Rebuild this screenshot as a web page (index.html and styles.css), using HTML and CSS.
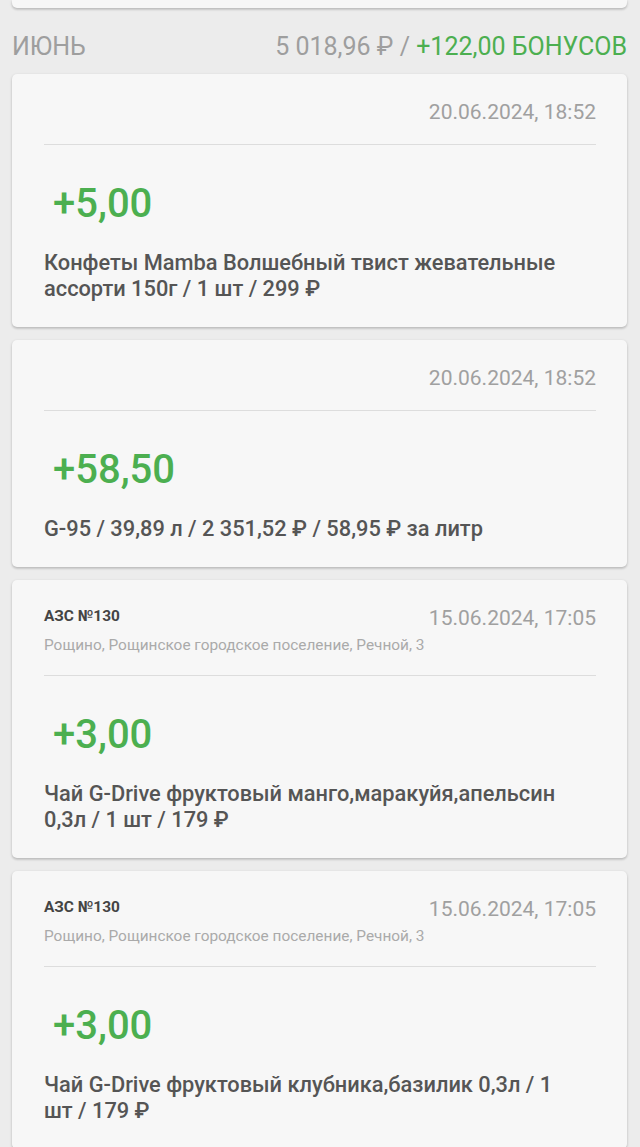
FILE: index.html
```html
<!DOCTYPE html>
<html lang="ru">
<head>
<meta charset="utf-8">
<link rel="stylesheet" href="styles.css">
</head>
<body>
<div class="page">
  <div class="card card-top"></div>
  <div class="month">
    <span class="month-name">ИЮНЬ</span>
    <span class="month-total">5 018,96 ₽ / <span class="green">+122,00 БОНУСОВ</span></span>
  </div>

  <div class="card">
    <div class="head">
      <div class="place"></div>
      <div class="date">20.06.2024, 18:52</div>
    </div>
    <div class="divider"></div>
    <div class="amount">+5,00</div>
    <div class="desc">Конфеты Mamba Волшебный твист жевательные ассорти 150г / 1 шт / 299 ₽</div>
  </div>

  <div class="card">
    <div class="head">
      <div class="place"></div>
      <div class="date">20.06.2024, 18:52</div>
    </div>
    <div class="divider"></div>
    <div class="amount">+58,50</div>
    <div class="desc">G-95 / 39,89 л / 2 351,52 ₽ / 58,95 ₽ за литр</div>
  </div>

  <div class="card">
    <div class="head">
      <div class="place">АЗС №130</div>
      <div class="date">15.06.2024, 17:05</div>
    </div>
    <div class="address">Рощино, Рощинское городское поселение, Речной, 3</div>
    <div class="divider"></div>
    <div class="amount">+3,00</div>
    <div class="desc">Чай G-Drive фруктовый манго,маракуйя,апельсин 0,3л / 1 шт / 179 ₽</div>
  </div>

  <div class="card">
    <div class="head">
      <div class="place">АЗС №130</div>
      <div class="date">15.06.2024, 17:05</div>
    </div>
    <div class="address">Рощино, Рощинское городское поселение, Речной, 3</div>
    <div class="divider"></div>
    <div class="amount">+3,00</div>
    <div class="desc">Чай G-Drive фруктовый клубника,базилик 0,3л / 1 шт / 179 ₽</div>
  </div>
</div>
</body>
</html>
```

FILE: styles.css
```css
html, body {
  margin: 0;
  padding: 0;
  background: #ececec;
  font-family: Roboto, "Noto Sans", sans-serif;
}

.page {
  width: 640px;
  height: 1147px;
  overflow: hidden;
  padding: 0 13px 0 12px;
  box-sizing: border-box;
  display: flex;
  flex-direction: column;
}

.card {
  background: #f7f7f7;
  border-radius: 5px;
  box-shadow: 0 1px 3px rgba(0, 0, 0, 0.18), 0 2px 2px rgba(0, 0, 0, 0.08);
  padding: 26px 31px 25px 32px;
  margin-bottom: 13px;
  flex-shrink: 0;
}

.card-top {
  height: 8px;
  padding: 0;
  margin: 0;
  border-radius: 0 0 5px 5px;
}

.month {
  display: flex;
  justify-content: space-between;
  align-items: center;
  height: 30px;
  margin: 24px 0 13px;
  font-size: 25px;
  color: #9e9e9e;
}

.green {
  color: #4caf50;
}

.head {
  display: flex;
  justify-content: space-between;
  align-items: flex-start;
}

.place {
  font-size: 15.4px;
  font-weight: 700;
  color: #444;
  line-height: 20px;
}

.date {
  font-size: 21px;
  color: #a0a0a0;
  line-height: 24px;
}

.address {
  font-size: 15.4px;
  color: #aaaaaa;
  line-height: 20px;
  margin-top: 5px;
}

.divider {
  height: 1px;
  background: #dddddd;
  margin-top: 20px;
}

.amount {
  font-size: 40px;
  color: #4caf50;
  line-height: 44px;
  margin-top: 37px;
  padding-left: 9px;
  font-weight: 500;
}

.desc {
  font-size: 21.8px;
  font-weight: 500;
  color: #555555;
  line-height: 26px;
  margin-top: 24px;
  padding-right: 20px;
}
```
